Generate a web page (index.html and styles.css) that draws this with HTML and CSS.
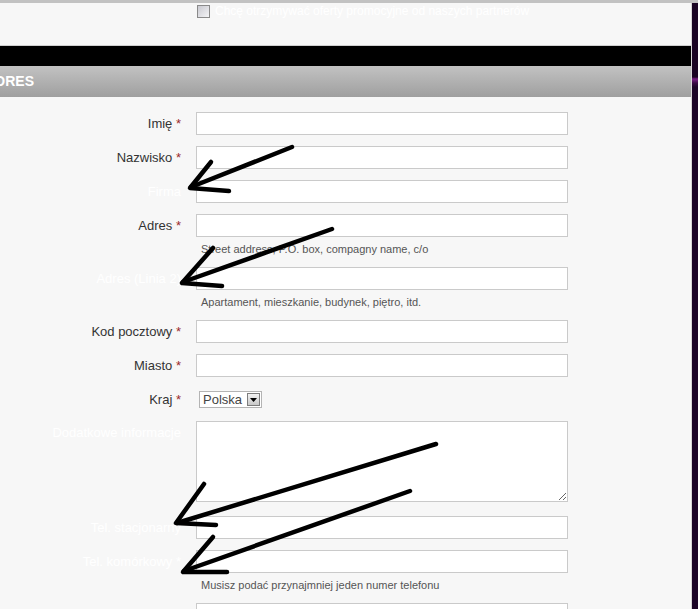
FILE: index.html
```html
<!DOCTYPE html>
<html lang="pl">
<head>
  <meta charset="UTF-8">
  <meta name="viewport" content="width=device-width, initial-scale=1">
  <title>Adres</title>
  <link rel="stylesheet" href="styles.css">
</head>
<body>
  <div class="topline"></div>
  <div class="page">
    <div class="panel">
      <div class="optin">
        <label class="optin-label"><input type="checkbox" class="optin-check">Chcę otrzymywać oferty promocyjne od naszych partnerów</label>
      </div>
      <div class="blackbar"></div>
      <h2 class="section-head">ADRES</h2>
      <form class="address-form">
        <div class="row">
          <label class="field-label">Imię <span class="req">*</span></label>
          <input type="text" class="field-input">
        </div>
        <div class="row">
          <label class="field-label">Nazwisko <span class="req">*</span></label>
          <input type="text" class="field-input">
        </div>
        <div class="row">
          <label class="field-label faint">Firma</label>
          <input type="text" class="field-input">
        </div>
        <div class="row">
          <label class="field-label">Adres <span class="req">*</span></label>
          <input type="text" class="field-input">
          <div class="hint">Street address, P.O. box, compagny name, c/o</div>
        </div>
        <div class="row">
          <label class="field-label faint">Adres (Linia 2)</label>
          <input type="text" class="field-input">
          <div class="hint">Apartament, mieszkanie, budynek, piętro, itd.</div>
        </div>
        <div class="row">
          <label class="field-label">Kod pocztowy <span class="req">*</span></label>
          <input type="text" class="field-input">
        </div>
        <div class="row">
          <label class="field-label">Miasto <span class="req">*</span></label>
          <input type="text" class="field-input">
        </div>
        <div class="row row-short">
          <label class="field-label">Kraj <span class="req">*</span></label>
          <div class="select-box">
            <select class="country">
              <option>Polska</option>
            </select>
            <span class="select-btn">
              <svg width="7" height="4" viewBox="0 0 7 4"><path d="M0 0h7L3.5 4z" fill="#000"/></svg>
            </span>
          </div>
        </div>
        <div class="row row-tall">
          <label class="field-label faint">Dodatkowe informacje</label>
          <textarea class="field-area"></textarea>
        </div>
        <div class="row">
          <label class="field-label faint">Tel. stacjonarny</label>
          <input type="text" class="field-input">
        </div>
        <div class="row">
          <label class="field-label faint">Tel. komórkowy *</label>
          <input type="text" class="field-input">
          <div class="hint">Musisz podać przynajmniej jeden numer telefonu</div>
        </div>
        <div class="row">
          <label class="field-label faint"></label>
          <input type="text" class="field-input">
        </div>
      </form>
    </div>
    <div class="backdrop"></div>
  </div>

  <!-- strzałki narysowane na zrzucie -->
  <svg class="arrows" width="698" height="609" viewBox="0 0 698 609">
    <g fill="none" stroke="#000" stroke-width="4.5" stroke-linecap="round" stroke-linejoin="round">
      <path d="M292 147 L191 187"/>
      <path d="M211 162 L190 188 L229 191"/>
      <path d="M332 229 L183 282"/>
      <path d="M213 248 L182 283 L222 286"/>
      <path d="M436 444 L177 523"/>
      <path d="M204 484 L176 523 L216 525"/>
      <path d="M410 491 L184 571"/>
      <path d="M213 537 L183 572 L227 572"/>
    </g>
  </svg>
</body>
</html>
```

FILE: styles.css
```css
body {
  margin: 0;
  font-family: "Liberation Sans", Arial, sans-serif;
  background: #1c0528;
  overflow: hidden;
  position: relative;
}
.topline {
  height: 3px;
  background: #c2c2c2;
}
.page {
  display: flex;
  height: 606px;
}
.panel {
  width: 691px;
  border-right: 1px solid #d6d6d6;
  background: #f7f7f7;
}
.backdrop {
  flex: 1;
  background: linear-gradient(#1a0424 0, #1a0424 74px, #7a1f86 76px, #3a0a45 80px, #1c0528 84px, #1c0528 100%);
}
.optin {
  height: 43px;
  border-bottom: 1px solid #cfcfcf;
  padding: 2px 0 0 197px;
  box-sizing: border-box;
}
.optin-label {
  display: flex;
  align-items: center;
  gap: 5px;
  color: #fff;
  font-size: 12px;
  line-height: 13px;
}
.optin-check {
  appearance: none;
  margin: 0;
  width: 13px;
  height: 13px;
  border: 1px solid #8a8a8a;
  background: linear-gradient(135deg, #c9c9d0, #f4f4f6);
  box-sizing: border-box;
}
.blackbar {
  height: 20px;
  background: #000;
}
.section-head {
  margin: 0;
  height: 31px;
  line-height: 31px;
  font-size: 14px;
  font-weight: bold;
  color: #fff;
  text-indent: -15px;
  background: linear-gradient(#c2c2c2, #9f9f9f);
}
.address-form {
  display: flex;
  flex-direction: column;
  gap: 11px;
  padding-top: 15px;
}
.row {
  display: grid;
  grid-template-columns: 181px 372px;
  column-gap: 15px;
  align-items: start;
}
.row-short {
  height: 22px;
}
.row-tall {
  margin-bottom: 3px;
}
.field-label {
  text-align: right;
  font-size: 13px;
  line-height: 22px;
  padding-top: 1px;
  color: #333;
}
.row-short .field-label {
  line-height: 21px;
}
.field-label.faint {
  color: #fff;
}
.req {
  color: #9b2a2a;
}
.field-input {
  display: block;
  width: 372px;
  height: 23px;
  margin: 0;
  border: 1px solid #cacaca;
  background: #fff;
  box-sizing: border-box;
}
.field-area {
  display: block;
  width: 372px;
  height: 81px;
  margin: 0;
  border: 1px solid #cacaca;
  background: #fff;
  box-sizing: border-box;
}
.hint {
  grid-column: 2;
  margin-top: 6px;
  padding-left: 5px;
  font-size: 11px;
  line-height: 13px;
  color: #555;
}
.select-box {
  display: flex;
  align-items: center;
  width: 63px;
  height: 17px;
  margin: 3px 0 0 3px;
  border: 1px solid #b4b4b4;
  background: #fff;
  box-sizing: border-box;
}
.country {
  appearance: none;
  flex: 1;
  border: 0;
  padding: 0 0 0 3px;
  background: transparent;
  font-family: "Liberation Sans", Arial, sans-serif;
  font-size: 13px;
  color: #444;
  outline: none;
}
.select-btn {
  display: flex;
  align-items: center;
  justify-content: center;
  width: 13px;
  height: 13px;
  margin-right: 1px;
  border: 1px solid #7d7d7d;
  background: linear-gradient(#f2f2f2, #c8c8c8);
  box-sizing: border-box;
}
.arrows {
  position: absolute;
  top: 0;
  left: 0;
  pointer-events: none;
}
```
